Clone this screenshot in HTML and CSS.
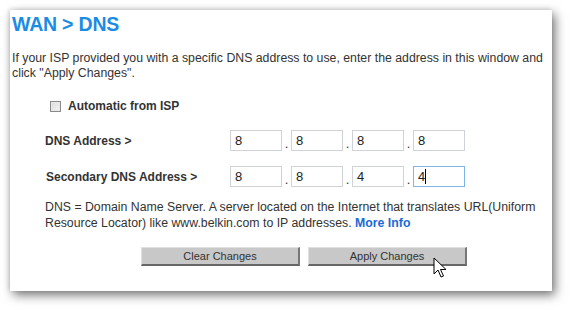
FILE: index.html
```html
<!DOCTYPE html>
<html>
<head>
<meta charset="utf-8">
<link rel="stylesheet" href="styles.css">
</head>
<body>
<div class="panel">
  <h1 class="title">WAN &gt; DNS</h1>
  <p class="intro">If your ISP provided you with a specific DNS address to use, enter the address in this window and click "Apply Changes".</p>
  <label class="auto"><span class="check"></span>Automatic from ISP</label>
  <div class="row row1">
    <span class="label">DNS Address &gt;</span>
    <div class="ip">
      <span class="box">8</span><span class="dot">.</span>
      <span class="box">8</span><span class="dot">.</span>
      <span class="box">8</span><span class="dot">.</span>
      <span class="box">8</span>
    </div>
  </div>
  <div class="row row2">
    <span class="label">Secondary DNS Address &gt;</span>
    <div class="ip">
      <span class="box">8</span><span class="dot">.</span>
      <span class="box">8</span><span class="dot">.</span>
      <span class="box">4</span><span class="dot">.</span>
      <span class="box focus">4<span class="caret"></span></span>
    </div>
  </div>
  <p class="note">DNS = Domain Name Server. A server located on the Internet that translates URL(Uniform Resource Locator) like www.belkin.com to IP addresses. <b class="more">More Info</b></p>
  <div class="buttons">
    <span class="btn">Clear Changes</span>
    <span class="btn apply">Apply Changes
      <svg class="cursor" width="14" height="22" viewBox="0 0 14 22"><path d="M1 1 L1 17 L5 13 L8 20 L10.5 19 L7.5 12.5 L13 12.5 Z" fill="#fff" stroke="#000" stroke-width="1" stroke-linejoin="miter"/></svg>
    </span>
  </div>
</div>
</body>
</html>
```
FILE: styles.css
```css
html, body { margin: 0; padding: 0; background: #fff; }
body { width: 570px; height: 310px; overflow: hidden; font-family: "Liberation Sans", Arial, sans-serif; color: #333; }
.panel {
  margin: 10px 0 0 10px;
  width: 542px;
  height: 281px;
  background: #fff;
  box-shadow: 3px 4px 10px rgba(0,0,0,0.55), -1px -1px 4px rgba(0,0,0,0.12);
  box-sizing: border-box;
  padding: 3px 0 0 2px;
  position: relative;
}
.title { margin: 0; font-size: 19.5px; font-weight: bold; color: #1a8ce6; line-height: 22px; letter-spacing: -0.2px; }
.intro { margin: 16px 0 0 0; font-size: 12.3px; line-height: 15px; color: #333; width: 538px; }
.auto { display: flex; align-items: center; margin: 18px 0 0 38px; font-size: 12px; font-weight: bold; height: 14px; }
.check { width: 11px; height: 11px; border: 1px solid #8a8a8a; background: linear-gradient(135deg, #dcdcdc, #f4f4f4); margin-right: 7px; box-sizing: border-box; box-shadow: inset 0 0 0 1px #e8e8e8; }
.row { display: flex; align-items: center; margin-left: 33px; }
.row1 { margin-top: 17px; }
.row2 { margin-top: 15px; margin-left: 34px; }
.label { font-size: 12px; font-weight: bold; width: 185px; }
.row2 .label { width: 184px; }
.ip { display: flex; align-items: flex-end; }
.box { width: 52px; height: 21px; border: 1px solid #cfd3d7; box-sizing: border-box; font-size: 13px; line-height: 19px; padding-left: 4px; color: #222; position: relative; }
.box.focus { border-color: #7eb4ea; }
.caret { display: inline-block; width: 1px; height: 15px; background: #000; vertical-align: -3px; }
.dot { width: 9px; text-align: center; font-size: 13px; line-height: 15px; }
.note { margin: 12px 0 0 33px; font-size: 12.3px; line-height: 16px; width: 500px; }
.more { color: #1a6ad6; font-weight: bold; }
.buttons { display: flex; gap: 8px; margin: 16px 0 0 129px; }
.btn { width: 159px; height: 19px; box-sizing: border-box; background: #c8c8c8; border-top: 1px solid #e0e0e0; border-left: 1px solid #e0e0e0; border-right: 2px solid #777; border-bottom: 2px solid #666; font-size: 11px; line-height: 16px; text-align: center; color: #333; position: relative; }
.cursor { position: absolute; left: 124px; top: 9px; }
```
